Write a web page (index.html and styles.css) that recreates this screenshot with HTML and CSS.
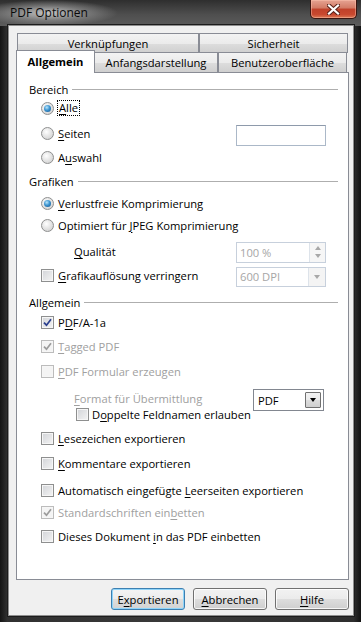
FILE: index.html
```html
<!DOCTYPE html>
<html>
<head>
  <title>PDF Optionen</title>
  <meta charset="utf-8" />
  <link rel="stylesheet" href="styles.css">
</head>
<body>
  <div class="window">
    <div class="titlebar">
      <span class="title">PDF Optionen</span>
      <div class="close">
        <svg width="13" height="11" viewBox="0 0 13 11">
          <path d="M2 1.5 L11 9.5 M11 1.5 L2 9.5" stroke="#5a2219" stroke-width="4.2" stroke-linecap="square" />
          <path d="M2 1.5 L11 9.5 M11 1.5 L2 9.5" stroke="#fff" stroke-width="2.2" stroke-linecap="square" />
        </svg>
      </div>
    </div>

    <div class="client">
      <div class="tabrow back">
        <div class="tab wide1">Verknüpfungen</div>
        <div class="tab wide2">Sicherheit</div>
      </div>
      <div class="tabrow front">
        <div class="tab active">Allgemein</div>
        <div class="tab wide3">Anfangsdarstellung</div>
        <div class="tab wide4">Benutzeroberfläche</div>
      </div>

      <div class="panel">
        <div class="row legend">Bereich</div>
        <div class="row opt gap1"><span class="radio on"></span><span class="focus"><u>A</u>lle</span></div>
        <div class="row opt gap7"><span class="radio"></span><span><u>S</u>eiten</span><span class="field pages"></span></div>
        <div class="row opt gap6"><span class="radio"></span><span>A<u>u</u>swahl</span></div>

        <div class="row legend gap6">Grafiken</div>
        <div class="row opt gap4"><span class="radio on"></span><span><u>V</u>erlustfreie Komprimierung</span></div>
        <div class="row opt gap4"><span class="radio"></span><span>Optimiert für <u>J</u>PEG Komprimierung</span></div>
        <div class="row sub gap8">
          <span><u>Q</u>ualität</span>
          <span class="field spin disabled">100 %
            <span class="spinbtns">
              <span class="tri up"></span>
              <span class="tri down"></span>
            </span>
          </span>
        </div>
        <div class="row opt gap6">
          <span class="check"></span><span><u>G</u>rafikauflösung verringern</span>
          <span class="field combo disabled">600 DPI<span class="dropbtn"><span class="tri down"></span></span></span>
        </div>

        <div class="row legend gap9">Allgemein</div>
        <div class="row opt gap2"><span class="check on"><svg width="9" height="9" viewBox="0 0 9 9"><path d="M1 4.6 L3.5 7.2 L8 1.2" /></svg></span><span>P<u>D</u>F/A-1a</span></div>
        <div class="row opt gap6 off"><span class="check on"><svg width="9" height="9" viewBox="0 0 9 9"><path d="M1 4.6 L3.5 7.2 L8 1.2" /></svg></span><span><u>T</u>agged PDF</span></div>
        <div class="row opt gap7 off"><span class="check"></span><span><u>P</u>DF Formular erzeugen</span></div>
        <div class="row sub gap9 off">
          <span><u>F</u>ormat für Übermittlung</span>
          <span class="field format">PDF<span class="dropbtn"><span class="tri down"></span></span></span>
        </div>
        <div class="row subcheck short"><span class="check"></span><span>D<u>o</u>ppelte Feldnamen erlauben</span></div>
        <div class="row opt gap8"><span class="check"></span><span><u>L</u>esezeichen exportieren</span></div>
        <div class="row opt gap7"><span class="check"></span><span><u>K</u>ommentare exportieren</span></div>
        <div class="row opt gap9"><span class="check"></span><span>Automatisch eingefügte <u>L</u>eerseiten exportieren</span></div>
        <div class="row opt gap4 off"><span class="check on"><svg width="9" height="9" viewBox="0 0 9 9"><path d="M1 4.6 L3.5 7.2 L8 1.2" /></svg></span><span>Standardschriften ein<u>b</u>etten</span></div>
        <div class="row opt gap6"><span class="check"></span><span>Dieses Dokument <u>i</u>n das PDF einbetten</span></div>
      </div>

      <div class="buttons">
        <div class="btn default">E<u>x</u>portieren</div>
        <div class="btn"><u>A</u>bbrechen</div>
        <div class="btn"><u>H</u>ilfe</div>
      </div>
    </div>
  </div>
</body>
</html>
```

FILE: styles.css
```css
body {
  margin: 0;
  font-family: "Open Sans", "Noto Sans", sans-serif;
  font-size: 11.2px;
  color: #000;
}
u {
  text-decoration-thickness: 1px;
  text-underline-offset: 2px;
}
.window {
  width: 361px;
  height: 622px;
  display: flex;
  flex-direction: column;
  background: linear-gradient(90deg, #141414 0%, #303030 2%, #3a3a3a 50%, #2e2e2e 98%, #121212 100%);
  overflow: hidden;
}
.titlebar {
  height: 26px;
  display: flex;
  align-items: flex-start;
  justify-content: space-between;
  background:
    radial-gradient(ellipse 70px 13px at 48px 13px, #c4c4c4 0%, rgba(150, 150, 150, 0.6) 55%, rgba(150, 150, 150, 0) 100%),
    linear-gradient(180deg, #2e2e2e 0%, #4e4e4e 55%, #5c5c5c 100%);
}
.title {
  margin: 4px 0 0 10px;
  font-size: 12px;
  color: #0a0a0a;
}
.close {
  width: 47px;
  height: 19px;
  margin-right: 4px;
  box-sizing: border-box;
  border: 1px solid #3b1510;
  border-top: 0;
  border-radius: 0 0 5px 5px;
  background: linear-gradient(180deg, #e6a392 0%, #d27a65 45%, #c0412a 50%, #c9482f 80%, #dc7a56 100%);
  box-shadow: inset 0 0 0 1px rgba(255, 200, 180, 0.45);
  display: flex;
  align-items: center;
  justify-content: center;
}
.client {
  flex: 1;
  margin: 0 8px 7px 9px;
  padding: 7px 0 5px 7px;
  background: #f0f0f0;
  box-shadow: 0 0 0 1px rgba(255, 255, 255, 0.5), 0 0 0 2px #1c1c1c;
  display: flex;
  flex-direction: column;
}
.tabrow {
  display: flex;
  height: 20px;
}
.tabrow.back {
  margin-left: 1px;
  margin-bottom: -1px;
}
.tab {
  box-sizing: border-box;
  height: 20px;
  border: 1px solid #898c95;
  border-bottom: 0;
  background: linear-gradient(180deg, #f3f3f3 0%, #ebebeb 50%, #dddddd 51%, #cfcfcf 100%);
  display: flex;
  align-items: center;
  justify-content: center;
  color: #000;
}
.tab + .tab {
  border-left: 0;
}
.wide1 { width: 182px; }
.wide2 { width: 149px; border-left: 1px solid #898c95 !important; }
.wide3 { width: 123px; }
.wide4 { width: 129px; border-left: 1px solid #898c95 !important; }
.tab.active {
  width: 79px;
  height: 23px;
  margin-top: -2px;
  margin-bottom: -1px;
  background: #fff;
  font-weight: bold;
  position: relative;
  z-index: 1;
  padding-bottom: 2px;
}
.panel {
  box-sizing: border-box;
  width: 333px;
  height: 508px;
  border: 1px solid #898c95;
  background: #fff;
  padding: 7px 10px 0 0;
}
.row {
  height: 18px;
  display: flex;
  align-items: center;
  white-space: nowrap;
}
.row.short { height: 14px; }
.gap1 { margin-top: 1px; }
.gap2 { margin-top: 2px; }
.gap4 { margin-top: 4px; }
.gap6 { margin-top: 6px; }
.gap7 { margin-top: 7px; }
.gap8 { margin-top: 8px; }
.gap9 { margin-top: 9px; }
.legend {
  padding-left: 12px;
  gap: 4px;
}
.legend::after {
  content: "";
  flex: 1;
  border-top: 1px solid #aeaeae;
}
.opt { padding-left: 24px; }
.sub { padding-left: 57px; }
.subcheck { padding-left: 59px; }
.off { color: #a0a0a0; }
.radio, .check {
  box-sizing: border-box;
  width: 13px;
  height: 13px;
  margin-right: 4px;
  flex: none;
}
.radio {
  border-radius: 50%;
  border: 1px solid #8e8f8f;
  background: radial-gradient(circle at 40% 35%, #ffffff 0%, #e6e6e6 45%, #c9c9c9 100%);
  display: flex;
  align-items: center;
  justify-content: center;
}
.radio.on::after {
  content: "";
  width: 7px;
  height: 7px;
  border-radius: 50%;
  background: radial-gradient(circle at 40% 35%, #b9e6fb 0%, #3d95d1 45%, #0e4f88 100%);
}
.focus {
  outline: 1px dotted #000;
  outline-offset: 0;
  line-height: 14px;
  padding: 0 1px;
}
.check {
  border: 1px solid #8e8f8f;
  background: linear-gradient(135deg, #d2d4d8 0%, #f4f4f4 100%);
  box-shadow: inset 0 0 0 1px #f6f6f6;
  display: flex;
  align-items: center;
  justify-content: center;
}
.check svg path {
  fill: none;
  stroke: #2a3f8e;
  stroke-width: 1.7;
}
.off .check {
  border-color: #bcbcbc;
  background: #f4f4f4;
}
.off .check svg path {
  stroke: #9c9c9c;
}
.subcheck .check { margin-right: 3px; }
.field {
  box-sizing: border-box;
  width: 90px;
  margin-left: auto;
  margin-right: 12px;
  border: 1px solid #abb8c8;
  border-top-color: #8e9aab;
  background: #fff;
  display: flex;
  align-items: center;
  padding-left: 3px;
  color: #000;
  flex: none;
}
.field.pages {
  height: 21px;
  margin-top: 5px;
}
.field.disabled {
  color: #a6a6a6;
  height: 21px;
  border-color: #c7d0dc;
}
.spin { margin-top: 2px; }
.combo { margin-top: 3px; height: 20px !important; }
.spinbtns {
  margin-left: auto;
  width: 16px;
  height: 100%;
  box-sizing: border-box;
  border-left: 1px solid #dde3ea;
  display: flex;
  flex-direction: column;
  align-items: center;
  justify-content: space-evenly;
  background: #f6f6f6;
}
.spinbtns .tri { border-left-width: 3px; border-right-width: 3px; }
.dropbtn {
  margin-left: auto;
  width: 17px;
  height: 100%;
  box-sizing: border-box;
  border-left: 1px solid #dde3ea;
  background: #f4f4f4;
  display: flex;
  align-items: center;
  justify-content: center;
}
.tri {
  width: 0;
  height: 0;
  border-left: 3.5px solid transparent;
  border-right: 3.5px solid transparent;
}
.tri.down { border-top: 4px solid #a8a8a8; }
.tri.up { border-bottom: 4px solid #a8a8a8; }
.field.format {
  width: 71px;
  height: 22px;
  margin-right: 14px;
  margin-top: 4px;
  border: 1px solid #828790;
  padding: 2px 2px 2px 4px;
  color: #000;
}
.format .dropbtn {
  width: 16px;
  border: 1px solid #707070;
  border-radius: 1px;
  background: linear-gradient(180deg, #f2f2f2 0%, #ebebeb 50%, #dddddd 51%, #cfcfcf 100%);
}
.format .tri.down { border-top-color: #000; }
.buttons {
  display: flex;
  justify-content: flex-end;
  gap: 8px;
  margin-top: 8px;
  width: 333px;
}
.btn {
  box-sizing: border-box;
  width: 74px;
  height: 22px;
  border: 1px solid #707070;
  border-radius: 3px;
  background: linear-gradient(180deg, #f2f2f2 0%, #ebebeb 50%, #dddddd 51%, #cfcfcf 100%);
  box-shadow: inset 0 0 0 1px rgba(255, 255, 255, 0.8);
  display: flex;
  align-items: center;
  justify-content: center;
  color: #000;
}
.btn.default {
  border-color: #3c7fb1;
  box-shadow: inset 0 0 0 1px #8fd4f9;
  background: linear-gradient(180deg, #f4f4f4 0%, #ececec 50%, #dedede 51%, #d3d3d3 100%);
}
```
